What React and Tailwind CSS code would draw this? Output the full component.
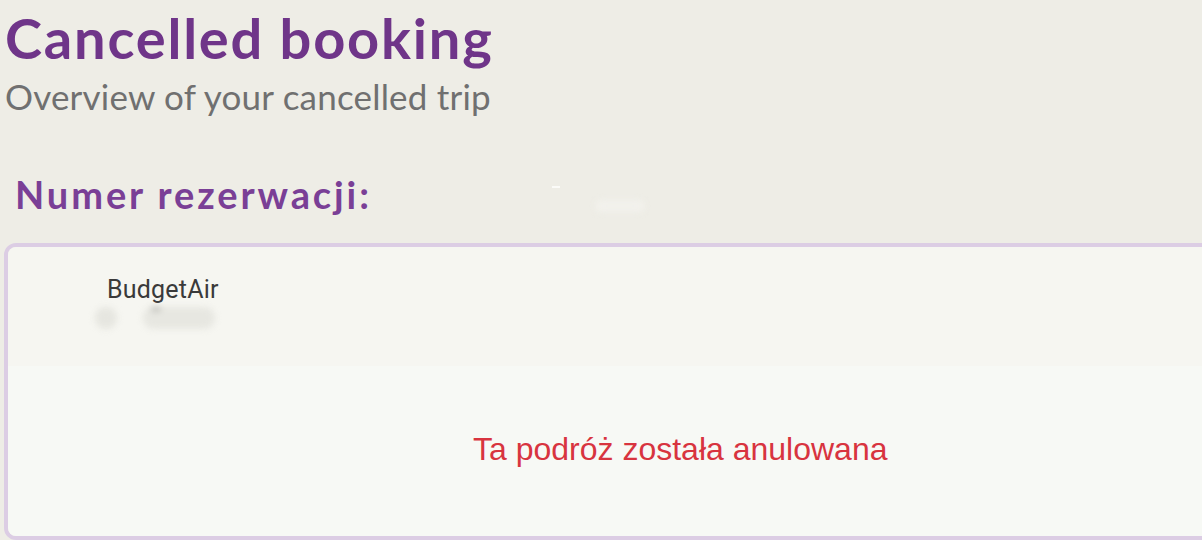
export default function App() {
  return (
    <div className="w-[1202px] h-[540px] overflow-hidden bg-[#eeede6]" style={{ fontFamily: "Lato, 'Noto Sans', sans-serif" }}>
      <div className="pl-[5px] pt-[6px]">
        <h1 className="text-[56px] leading-[64px] font-bold text-[#6f3589] tracking-[1.8px]">Cancelled booking</h1>
        <p className="text-[35px] leading-[40px] text-[#707070] mt-[6px] tracking-[0.2px]">Overview of your cancelled trip</p>
      </div>
      <div className="flex items-center pl-[15px] mt-[56px] h-[44px] relative">
        <h2 className="text-[38px] leading-[44px] font-bold text-[#7a3f96] tracking-[2.9px]">Numer rezerwacji:</h2>
        <div className="absolute left-[552px] top-[14px] w-[8px] h-[2px] bg-[#fbfbf8] blur-[0.5px]" />
        <div className="absolute left-[595px] top-[28px] w-[50px] h-[12px] rounded-full bg-[#f2f1ec] blur-[3px]" />
      </div>
      <div className="ml-[4px] mt-[27px] w-[1230px] h-[297px] rounded-[12px] border-[4px] border-[#dccde4] overflow-hidden flex flex-col">
        <div className="h-[119px] shrink-0 bg-[#f6f6f1] pl-[99px] pt-[28px]">
          <div className="text-[25px] leading-[30px] text-[#3a3a3a] tracking-[0.2px]" style={{ fontFamily: "Roboto, sans-serif" }}>BudgetAir</div>
          <div className="flex items-center mt-[2px] ml-[-12px]">
            <div className="w-[22px] h-[22px] rounded-full bg-[#e6e6e0] blur-[3px]" />
            <div className="relative ml-[26px] w-[72px] h-[22px] rounded-full bg-[#e7e7e1] blur-[3px]">
              <div className="absolute left-[8px] top-[0px] w-[10px] h-[4px] rounded-full bg-[#b5b5b0]" />
            </div>
          </div>
        </div>
        <div className="flex-1 bg-[#f7f9f5] pl-[465px] pt-[65px]">
          <p className="text-[32px] leading-[36px] text-[#d8343f]" style={{ fontFamily: "'Liberation Sans', Arial, sans-serif" }}>Ta podróż została anulowana</p>
        </div>
      </div>
    </div>
  );
}
